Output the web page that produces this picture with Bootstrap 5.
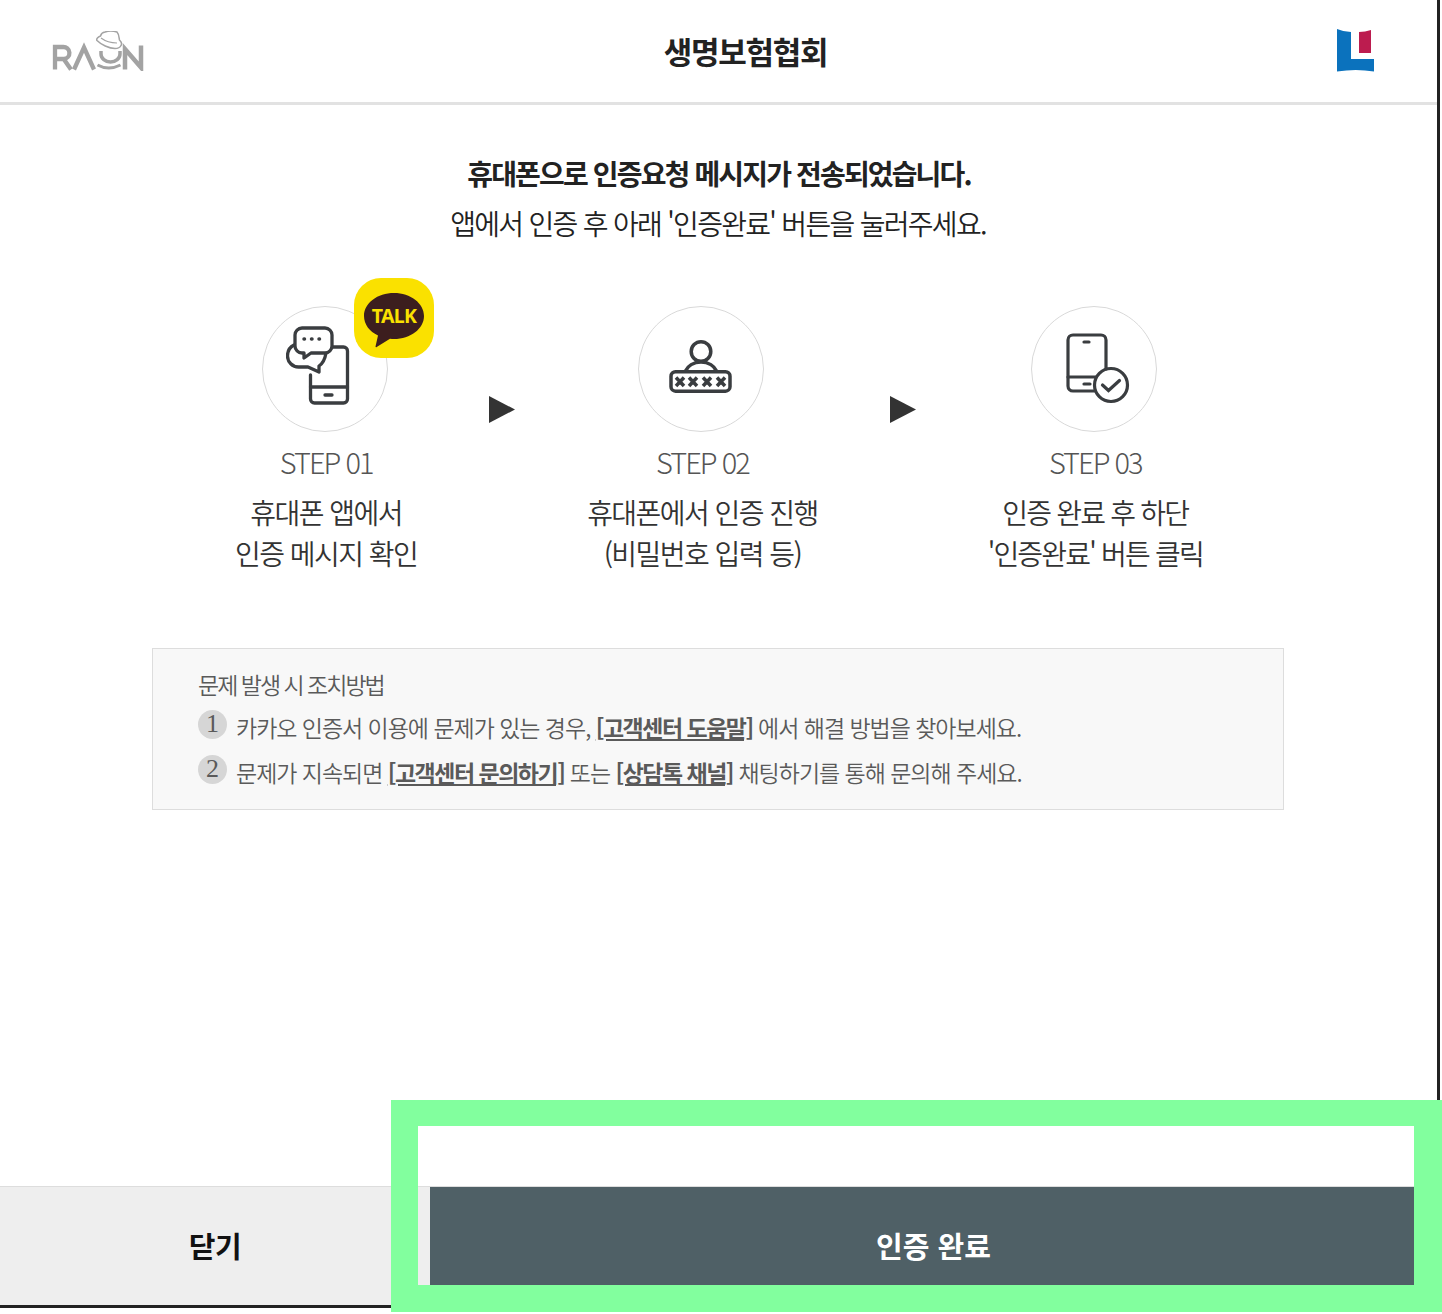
<!DOCTYPE html>
<html lang="ko">
<head>
<meta charset="utf-8">
<title>생명보험협회</title>
<link href="https://cdn.jsdelivr.net/npm/bootstrap@5.3.0/dist/css/bootstrap.min.css" rel="stylesheet">
<style>
html,body{margin:0;background:#fff;}
body{font-family:"Noto Sans CJK KR","Noto Sans",sans-serif;height:1314px;width:1442px;position:relative;overflow:hidden;}
.shell{width:1437px;height:1305px;}
.edge-right{position:absolute;left:1437px;top:0;width:3px;height:1100px;background:#222;}
.edge-bottom{position:absolute;left:0;top:1305px;width:392px;height:3px;background:#222;}
.top-head{height:105px;border-bottom:3px solid #e2e2e2;padding:0 63px 0 52px;}
.top-head h1{font-size:31px;font-weight:700;letter-spacing:-1.25px;color:#222;margin:0 0 1px 0;line-height:1.4;position:relative;left:5px;}
.lina{margin-top:-1px;}
.intro{margin-top:47px;text-align:center;padding-left:1px;}
.intro h2{font-size:28px;font-weight:700;letter-spacing:-1.85px;color:#222;line-height:42px;margin:0;}
.intro p{font-size:28px;font-weight:350;letter-spacing:-1.7px;color:#222;line-height:42px;margin:8px 0 0;padding-right:2px;}
.steps{margin-top:35px;gap:72px;padding-left:1px;}
.step-item{text-align:center;}
.ring{width:126px;height:126px;border:1px solid #d9d9d9;border-radius:50%;position:relative;background:#fff;margin:27px 0 0 calc(50% - 64px);}
.kakao{position:absolute;left:91px;top:-29px;}
.icon-a{left:23px;top:18px;}
.icon-b{left:30px;top:32px;}
.icon-c{left:34px;top:26px;}
.step-no{font-size:29px;font-weight:300;letter-spacing:-2px;color:#555;line-height:42px;margin-top:8px;}
.step-txt{font-size:28px;font-weight:350;letter-spacing:-1.55px;color:#333;line-height:41px;margin-top:10px;white-space:nowrap;}
.step-txt-tight{letter-spacing:-1.8px;}
.play{margin-top:117px;flex:none;}
.notice{width:1132px;height:162px;margin:74px 0 0 152px;background:#f8f8f8;border:1px solid #ddd;padding:17px 45px;color:#5a5a5a;}
.notice-title{font-size:23px;font-weight:350;letter-spacing:-2px;line-height:36px;}
.notice-row{font-size:23px;font-weight:350;letter-spacing:-1.03px;line-height:36px;margin-top:9px;white-space:nowrap;}
.notice-title + .notice-row{margin-top:7px;}
.num{width:29px;height:29px;border-radius:50%;background:#d6d6d6;font-family:"Liberation Serif",serif;font-size:26px;line-height:28px;text-align:center;color:#5a5a5a;margin-right:9px;letter-spacing:0;position:relative;top:1px;flex:none;}
.notice a{color:#5a5a5a;font-weight:700;letter-spacing:-1.5px;text-decoration:underline;}
.foot{height:119px;border-top:1px solid #ddd;background:#eee;}
.btn-close-area{width:430px;font-size:29px;font-weight:700;color:#111;letter-spacing:-.5px;border:0;background:transparent;padding:0;}
.btn-ok{flex:1;font-size:29px;font-weight:700;color:#fff;background:#4f6066;border:0;border-radius:0;letter-spacing:0;}
.frame{position:absolute;left:391px;top:1100px;width:1051px;height:212px;border-style:solid;border-color:#82ff9e;border-width:26px 28px 27px 27px;pointer-events:none;}
</style>
</head>
<body>
<div class="shell d-flex flex-column">
  <header class="top-head d-flex align-items-center justify-content-between">
    <svg class="raon" width="92" height="40" viewBox="0 0 92 40" fill="none" stroke="#a3a3a3" aria-label="RAON">
      <path d="M3 38.500V16h8a6 6 0 0 1 .8 12H4M11 27l8 11.500" stroke-width="4.300"/>
      <path d="M22 38.500l10-22 10 22" stroke-width="4.300"/>
      <path d="M49 20v3a9.500 8 0 0 0 19 0v-3" stroke-width="3.500"/>
      <path d="M45.500 34q11 6 23 0" stroke-width="3"/>
      <path d="M73 38.500V18l16 18.500V14.500" stroke-width="4.500"/>
      <path d="M53 1c4-1.500 9-1 12 0 2 2 2 6 2.500 8 2 2 2.500 4 1.500 5.500-1 2-3 3-6 3-6 0-14-4-18-8-1-1.500 1-3.500 3.500-4.500.5-2 1.500-3.500 4.500-4z" stroke-width="1.500" fill="#fff"/>
      <path d="M49 7c4 3 9 5 16 5" stroke-width="1.200"/>
    </svg>
    <h1>생명보험협회</h1>
    <svg class="lina" width="37" height="43" viewBox="0 0 37 43" aria-label="로고">
      <path d="M0 0q7 3 14 3V30h23v12.500q-18-3-37 0z" fill="#0b72bd"/>
      <path d="M22 3q6 0 12-2V24H22z" fill="#bc1c4f"/>
    </svg>
  </header>

  <section class="intro">
    <h2>휴대폰으로 인증요청 메시지가 전송되었습니다.</h2>
    <p>앱에서 인증 후 아래 '인증완료' 버튼을 눌러주세요.</p>
  </section>

  <section class="steps d-flex justify-content-center">
    <div class="step-item">
      <div class="ring">
        <svg width="70" height="80" viewBox="0 0 70 80" fill="none" stroke="#3a3d40" stroke-width="3.300" stroke-linejoin="round" stroke-linecap="round" class="position-absolute icon-a">
          <path d="M41 22h16.500a4 4 0 0 1 4 4v48a4 4 0 0 1-4 4h-29a4 4 0 0 1-4-4V50"/>
          <path d="M24.500 62h37M39 70h7"/>
          <path d="M8 20C4 22 1.500 26 1.500 31c0 6 5 11 11 11H22l11 5v-6c3-2 6-7 7-13"/>
          <path d="M16 3h23a7 7 0 0 1 7 7v11a7 7 0 0 1-7 7H25l-7 5v-5h-2a7 7 0 0 1-7-7V10a7 7 0 0 1 7-7z" fill="#fff"/>
          <path d="M18 14h.5M25.500 14h.5M33 14h.5" stroke-width="3.500"/>
        </svg>
        <svg class="kakao" width="80" height="80" viewBox="0 0 80 80">
          <rect width="80" height="80" rx="27" fill="#fae100"/>
          <path d="M40 15c-16.500 0-30 10-30 23 0 8.500 5.500 15.500 14 19.500l-2.500 11c0 .8.6 1 1.200.5L36 60.800c1.300.1 2.700.2 4 .2 16.500 0 30-10.300 30-23S56.500 15 40 15z" fill="#3c1e1e"/>
          <text x="40" y="45" text-anchor="middle" font-family="'Noto Sans',sans-serif" font-size="19.500" font-weight="700" fill="#fae100" letter-spacing="-.7">TALK</text>
        </svg>
      </div>
      <div class="step-no">STEP 01</div>
      <div class="step-txt">휴대폰 앱에서<br>인증 메시지 확인</div>
    </div>
    <svg class="play" width="26" height="27" viewBox="0 0 26 27"><path d="M0 0l26 13.500L0 27z" fill="#333"/></svg>
    <div class="step-item">
      <div class="ring">
        <svg width="64" height="56" viewBox="0 0 64 56" fill="none" stroke="#3a3d40" stroke-width="3.500" class="position-absolute icon-b">
          <circle cx="32" cy="12.500" r="9.800"/>
          <path d="M16.500 32c2-5 8-9 15.500-9s13.500 4 15.500 9"/>
          <rect x="2" y="32.700" width="59" height="19.500" rx="4.500"/>
          <path d="M7 38.500l8 8.500M15 38.500l-8 8.500M20 38.500l8 8.500M28 38.500l-8 8.500M34 38.500l8 8.500M42 38.500l-8 8.500M48 38.500l8 8.500M56 38.500l-8 8.500"/>
        </svg>
      </div>
      <div class="step-no">STEP 02</div>
      <div class="step-txt">휴대폰에서 인증 진행<br>(비밀번호 입력 등)</div>
    </div>
    <svg class="play" width="26" height="27" viewBox="0 0 26 27"><path d="M0 0l26 13.500L0 27z" fill="#333"/></svg>
    <div class="step-item">
      <div class="ring">
        <svg width="66" height="72" viewBox="0 0 66 72" fill="none" stroke="#3a3d40" stroke-width="3.200" stroke-linecap="round" class="position-absolute icon-c">
          <path d="M40 36V7a5 5 0 0 0-5-5H7a5 5 0 0 0-5 5v46a5 5 0 0 0 5 5h21"/>
          <path d="M2 44h28M18 9h5M18 51h6"/>
          <circle cx="45" cy="52" r="16.500"/>
          <path d="M36.500 52l6 5.500 11-10"/>
        </svg>
      </div>
      <div class="step-no">STEP 03</div>
      <div class="step-txt step-txt-tight">인증 완료 후 하단<br>'인증완료' 버튼 클릭</div>
    </div>
  </section>

  <section class="notice">
    <div class="notice-title">문제 발생 시 조치방법</div>
    <div class="notice-row d-flex"><span class="num">1</span><span>카카오 인증서 이용에 문제가 있는 경우, <a href="#">[고객센터 도움말]</a> 에서 해결 방법을 찾아보세요.</span></div>
    <div class="notice-row d-flex"><span class="num">2</span><span>문제가 지속되면 <a href="#">[고객센터 문의하기]</a> 또는 <a href="#">[상담톡 채널]</a> 채팅하기를 통해 문의해 주세요.</span></div>
  </section>

  <footer class="foot d-flex mt-auto">
    <button type="button" class="btn-close-area">닫기</button>
    <button type="button" class="btn-ok">인증 완료</button>
  </footer>
</div>
<div class="edge-right"></div>
<div class="edge-bottom"></div>
<div class="frame"></div>
<script src="https://cdn.jsdelivr.net/npm/bootstrap@5.3.0/dist/js/bootstrap.bundle.min.js"></script>
</body>
</html>
